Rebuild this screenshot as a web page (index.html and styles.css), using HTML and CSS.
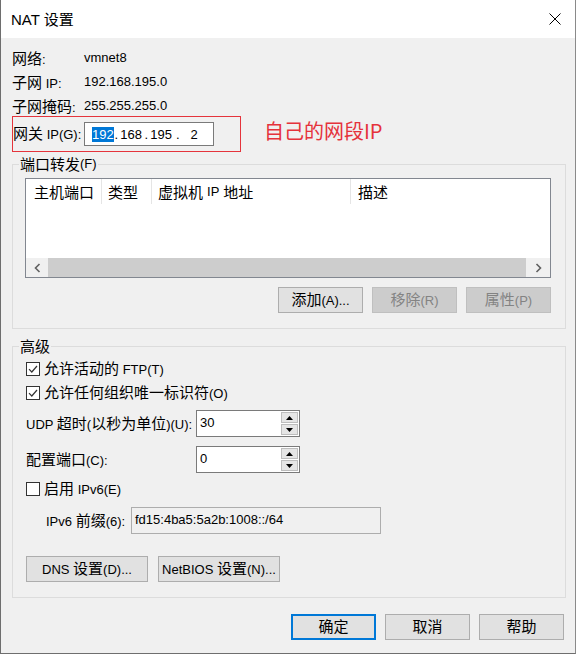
FILE: index.html
```html
<!DOCTYPE html>
<html lang="zh-CN">
<head>
<meta charset="utf-8">
<title>NAT 设置</title>
<link rel="stylesheet" href="styles.css">
</head>
<body>
<div class="win">
  <div class="titlebar">
    <div class="title">NAT <span class="z">设置</span></div>
    <svg class="close" width="12" height="12" viewBox="0 0 12 12"><path d="M0.5 0.5L11.5 11.5M11.5 0.5L0.5 11.5" stroke="#000" stroke-width="1" fill="none"/></svg>
  </div>
  <div class="content">
    <div class="info">
      <div class="row"><span class="lbl"><span class="z">网络</span>:</span><span class="val">vmnet8</span></div>
      <div class="row"><span class="lbl"><span class="z">子网</span> IP:</span><span class="val">192.168.195.0</span></div>
      <div class="row"><span class="lbl"><span class="z">子网掩码</span>:</span><span class="val">255.255.255.0</span></div>
    </div>
    <div class="gwrow">
      <div class="gwbox">
        <span class="gwlbl"><span class="z">网关</span> IP(G):</span>
        <div class="ipbox"><span class="sel">192</span><span class="dot">.</span><span class="oct">168</span><span class="dot">.</span><span class="oct">195</span><span class="dot wide">.</span><span class="oct">2</span></div>
      </div>
      <div class="note">自己的网段IP</div>
    </div>

    <fieldset class="grp pf">
      <legend class="legend"><span class="lt"><span class="z">端口转发</span>(F)</span></legend>
      <div class="pfin">
        <div class="list">
          <div class="lhead">
            <div class="col c1"><span class="z">主机端口</span></div>
            <div class="col c2"><span class="z">类型</span></div>
            <div class="col c3"><span class="z">虚拟机</span> IP <span class="z">地址</span></div>
            <div class="col c4"><span class="z">描述</span></div>
          </div>
          <div class="lbody"></div>
          <div class="hscroll">
            <div class="arr la"><svg width="7" height="10" viewBox="0 0 7 10"><path d="M5.5 1L1.5 5L5.5 9" stroke="#606060" stroke-width="1.6" fill="none"/></svg></div>
            <div class="thumb"></div>
            <div class="arr ra"><svg width="7" height="10" viewBox="0 0 7 10"><path d="M1.5 1L5.5 5L1.5 9" stroke="#606060" stroke-width="1.6" fill="none"/></svg></div>
          </div>
        </div>
        <div class="btnrow">
          <div class="btn w85"><span class="bt"><span class="z">添加</span>(A)...</span></div>
          <div class="btn w85 dis"><span class="bt"><span class="z">移除</span>(R)</span></div>
          <div class="btn w85 dis"><span class="bt"><span class="z">属性</span>(P)</span></div>
        </div>
      </div>
    </fieldset>

    <fieldset class="grp adv">
      <legend class="legend"><span class="lt"><span class="z">高级</span></span></legend>
      <div class="advin">
        <div class="chk first">
          <svg class="cb" width="14" height="14" viewBox="0 0 14 14"><rect x="0.5" y="0.5" width="13" height="13" fill="#fff" stroke="#333"/><path d="M3 7.2L5.8 10L11 4" stroke="#333" stroke-width="1.2" fill="none"/></svg>
          <span><span class="z">允许活动的</span> FTP(T)</span>
        </div>
        <div class="chk">
          <svg class="cb" width="14" height="14" viewBox="0 0 14 14"><rect x="0.5" y="0.5" width="13" height="13" fill="#fff" stroke="#333"/><path d="M3 7.2L5.8 10L11 4" stroke="#333" stroke-width="1.2" fill="none"/></svg>
          <span><span class="z">允许任何组织唯一标识符</span>(O)</span>
        </div>
        <div class="srow s1">
          <span class="slbl">UDP <span class="z">超时</span>(<span class="z">以秒为单位</span>)(U):</span>
          <div class="spin">
            <div class="stext">30</div>
            <div class="sbtns">
              <div class="sb"><svg width="7" height="4" viewBox="0 0 7 4"><path d="M0 4L3.5 0L7 4Z" fill="#000"/></svg></div>
              <div class="sb"><svg width="7" height="4" viewBox="0 0 7 4"><path d="M0 0L3.5 4L7 0Z" fill="#000"/></svg></div>
            </div>
          </div>
        </div>
        <div class="srow s2">
          <span class="slbl"><span class="z">配置端口</span>(C):</span>
          <div class="spin">
            <div class="stext">0</div>
            <div class="sbtns">
              <div class="sb"><svg width="7" height="4" viewBox="0 0 7 4"><path d="M0 4L3.5 0L7 4Z" fill="#000"/></svg></div>
              <div class="sb"><svg width="7" height="4" viewBox="0 0 7 4"><path d="M0 0L3.5 4L7 0Z" fill="#000"/></svg></div>
            </div>
          </div>
        </div>
        <div class="chk v6">
          <svg class="cb" width="14" height="14" viewBox="0 0 14 14"><rect x="0.5" y="0.5" width="13" height="13" fill="#fff" stroke="#333"/></svg>
          <span><span class="z">启用</span> IPv6(E)</span>
        </div>
        <div class="prow">
          <span class="plbl">IPv6 <span class="z">前缀</span>(6):</span>
          <div class="pbox">fd15:4ba5:5a2b:1008::/64</div>
        </div>
        <div class="dnsrow">
          <div class="btn w122"><span class="bt">DNS <span class="z">设置</span>(D)...</span></div>
          <div class="btn w122"><span class="bt">NetBIOS <span class="z">设置</span>(N)...</span></div>
        </div>
      </div>
    </fieldset>

    <div class="footer">
      <div class="btn w85 def"><span class="bt"><span class="z">确定</span></span></div>
      <div class="btn w85"><span class="bt"><span class="z">取消</span></span></div>
      <div class="btn w85"><span class="bt"><span class="z">帮助</span></span></div>
    </div>
  </div>
</div>
</body>
</html>
```

FILE: styles.css
```css
* { box-sizing: border-box; }
html, body { margin: 0; padding: 0; background: #fff; }
body {
  font-family: "Liberation Sans", "Noto Sans CJK SC", sans-serif;
  font-size: 13px;
  color: #000;
}
.z { font-family: "Noto Sans CJK SC", sans-serif; font-size: 15px; }

.win {
  width: 576px;
  height: 654px;
  background: #f0f0f0;
  border-left: 1px solid #6e6e6e;
  border-right: 1px solid #8a8a8a;
  border-bottom: 1px solid #6e6e6e;
  display: flex;
  flex-direction: column;
}
.titlebar {
  height: 38px;
  flex: 0 0 38px;
  background: #fff;
  display: flex;
  align-items: center;
  justify-content: space-between;
  padding: 0 14px 0 10px;
}
.title { font-size: 15px; line-height: 20px; }
.close { display: block; }

.content { padding: 0 9px 0 11px; }

.info { padding-top: 8px; }
.row { height: 24px; line-height: 24px; display: flex; white-space: nowrap; }
.lbl { width: 72px; }

.gwrow { display: flex; align-items: center; margin-top: -2px; }
.gwbox {
  width: 229px;
  height: 36px;
  border: 1px solid #e5343c;
  display: flex;
  align-items: center;
  line-height: 20px;
  white-space: nowrap;
}
.gwlbl { width: 71px; }
.ipbox {
  width: 130px;
  height: 24px;
  border: 1px solid #7a7a7a;
  background: #fff;
  display: flex;
  align-items: center;
  padding-left: 7px;
  line-height: 15px;
}
.sel { background: #0078d7; color: #fff; }
.dot { width: 5px; text-align: center; }
.dot.wide { width: 8px; }
.oct { width: 25px; text-align: center; }
.note {
  margin-left: 23px;
  margin-bottom: 7px;
  font-family: "Noto Sans CJK SC", sans-serif;
  font-size: 20px;
  line-height: 24px;
  color: #e5323b;
}

.grp {
  margin: 0;
  padding: 0;
  border: 1px solid #dcdcdc;
  min-width: 0;
}
.legend {
  margin-left: 6px;
  padding: 0 1px;
  height: 18px;
  display: flex;
  align-items: center;
  overflow: visible;
}
.lt { display: block; line-height: 18px; height: 18px; white-space: nowrap; }
.lt .z { vertical-align: top; line-height: 18px; }
.pf { margin-top: 3px; }
.pfin { padding: 5px 14px 15px 12px; }

.list {
  height: 100px;
  border: 1px solid #828790;
  background: #fff;
  display: flex;
  flex-direction: column;
}
.lhead { height: 25px; flex: 0 0 25px; display: flex; }
.col { white-space: nowrap; display: flex; align-items: center; gap: 0; }
.c3 .z { margin: 0 4px; }
.c3 .z:first-child { margin-left: 0; }
.c1 { width: 76px; padding-left: 8px; border-right: 1px solid #e5e5e5; }
.c2 { width: 50px; padding-left: 6px; border-right: 1px solid #e5e5e5; }
.c3 { width: 199px; padding-left: 6px; border-right: 1px solid #e5e5e5; }
.c4 { flex: 1; padding-left: 7px; }
.lbody { flex: 1; }
.hscroll { height: 19px; flex: 0 0 19px; display: flex; background: #f0f0f0; }
.arr { display: flex; align-items: center; justify-content: center; }
.la { width: 22px; }
.ra { width: 24px; }
.thumb { flex: 1; background: #cdcdcd; }

.btnrow { margin-top: 9px; display: flex; justify-content: flex-end; gap: 9px; }
.btn {
  height: 26px;
  background: #e1e1e1;
  border: 1px solid #adadad;
  display: flex;
  align-items: center;
  justify-content: center;
  white-space: nowrap;
}
.bt { display: block; line-height: 20px; }
.w85 { width: 85px; }
.w122 { width: 122px; }
.btn.dis { background: #cccccc; border-color: #bfbfbf; color: #838383; }
.btn.def { border: 2px solid #0078d7; }

.adv { margin-top: 8px; }
.advin { padding: 2px 13px 15px 13px; }
.chk { height: 24px; display: flex; align-items: center; gap: 4px; line-height: 20px; white-space: nowrap; }
.cb { display: block; flex: 0 0 14px; }
.chk.v6 { margin-top: 4px; }

.srow { display: flex; align-items: center; height: 27px; white-space: nowrap; line-height: 20px; }
.srow.s1 { margin-top: 5px; }
.srow.s2 { margin-top: 9px; }
.slbl { width: 170px; }
.spin {
  width: 104px;
  height: 27px;
  border: 1px solid #7a7a7a;
  background: #fff;
  display: flex;
}
.stext { flex: 1; padding: 4px 0 0 3px; line-height: 16px; }
.sbtns { width: 18px; display: flex; flex-direction: column; padding: 1px 1px 1px 0; gap: 1px; }
.sb {
  flex: 1;
  background: #e5e5e5;
  border: 1px solid #bdbdbd;
  display: flex;
  align-items: center;
  justify-content: center;
}
.sb svg { display: block; }

.prow { display: flex; align-items: center; margin-top: 6px; white-space: nowrap; line-height: 20px; }
.plbl { width: 105px; padding-left: 20px; }
.pbox {
  width: 250px;
  height: 27px;
  border: 1px solid #adadad;
  background: #f0f0f0;
  padding: 4px 0 0 3px;
  line-height: 16px;
}
.dnsrow { display: flex; gap: 10px; margin-top: 22px; }

.footer { display: flex; justify-content: flex-end; gap: 9px; margin-top: 16px; padding-right: 2px; }
```
